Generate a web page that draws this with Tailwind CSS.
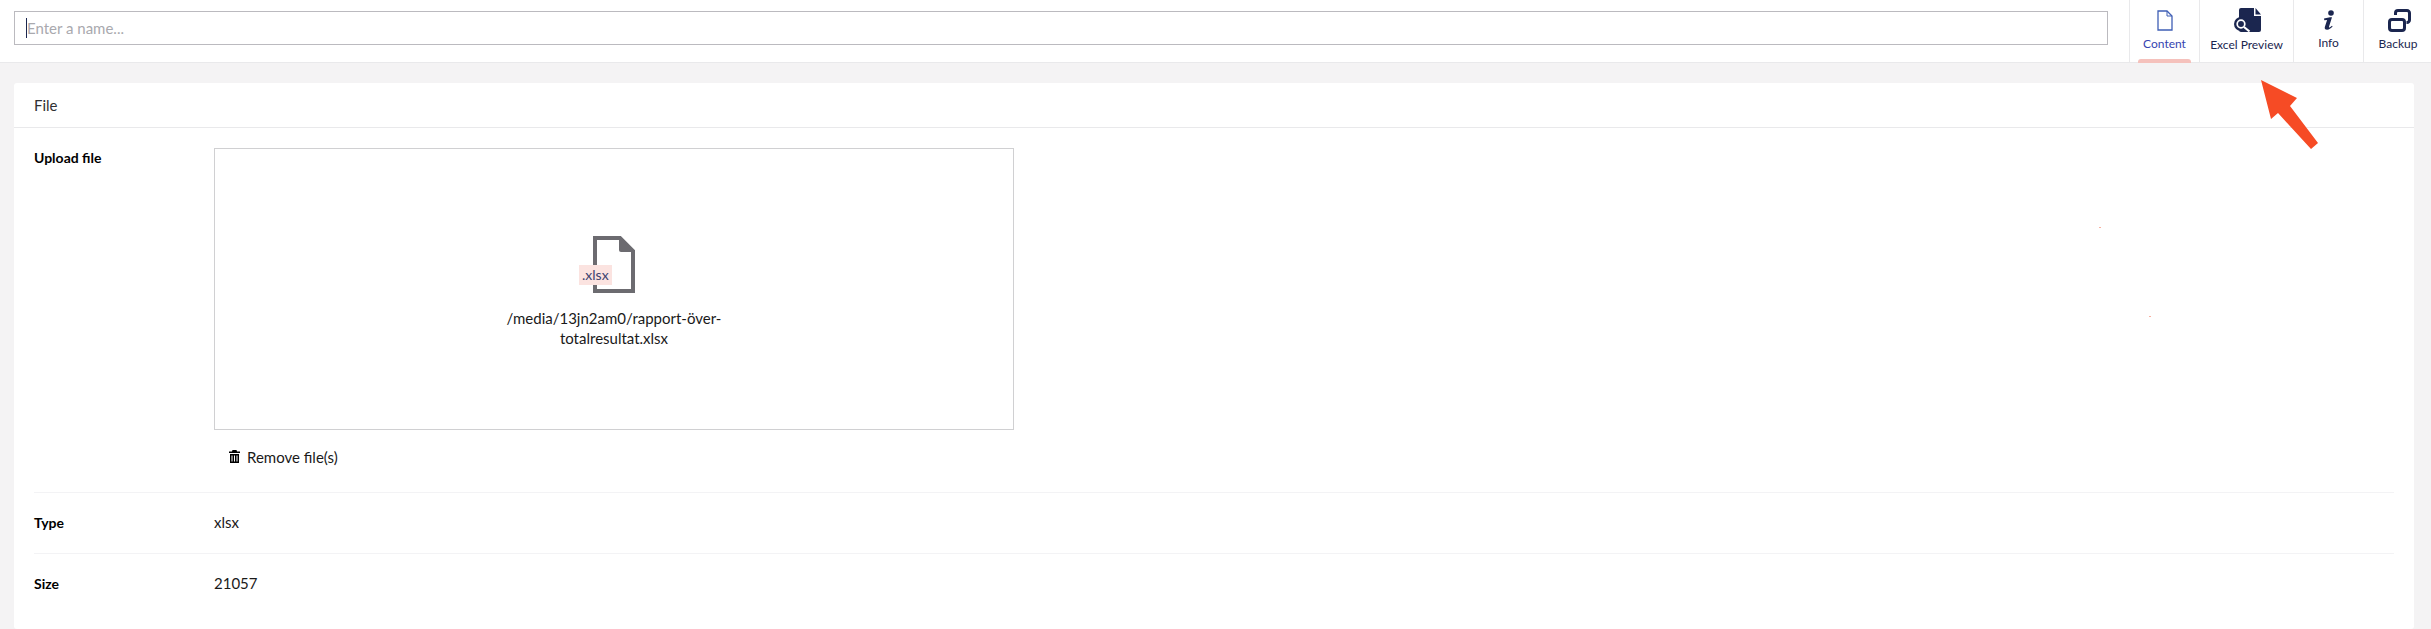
<!DOCTYPE html>
<html lang="en" class="overflow-hidden">
<head>
    <meta charset="UTF-8">
    <title>File</title>
    <script src="https://cdn.jsdelivr.net/npm/@tailwindcss/browser@4"></script>
</head>
<body class="h-[629px] overflow-hidden bg-[#f4f3f4] font-['Lato',sans-serif] text-[14px] text-[#1b264f] relative">
    <!-- Header -->
    <header class="h-[63px] bg-white border-b border-[#e9e9eb] flex">
        <div class="flex-1 pl-[14px] pr-[21px] pt-[11px]">
            <div class="h-[34px] border border-[#bbbabf] flex items-center pl-[11px] text-[15px] text-[#a9a9ae]">
                <span class="w-px h-[20px] bg-[#1b264f]"></span>Enter a name...
            </div>
        </div>
        <nav class="flex w-[302px] shrink-0 text-[12px]">
            <a class="relative w-[70px] border-l border-[#e9e9eb] flex flex-col items-center pt-[10px] text-[#3544b1]">
                <svg width="16" height="21" viewBox="0 0 16 21" fill="none" stroke="#3f5fb5" stroke-width="1.3"><path d="M1 1h9l5 5v14H1z"/><path d="M10 1v5h5" stroke-width="1"/></svg>
                <span class="mt-[5px] leading-[16px]">Content</span>
                <span class="absolute bottom-[-1px] left-[8px] w-[53px] h-[4px] rounded-t-[3px] bg-[#f5c1bc]"></span>
            </a>
            <a class="w-[94px] border-l border-[#e9e9eb] flex flex-col items-center pt-[8px]">
                <svg width="30" height="25" viewBox="0 0 30 25" fill="#1b264f"><path d="M7 2a2 2 0 0 1 2-2h13v8h7v14a2 2 0 0 1-2 2H9a2 2 0 0 1-2-2z"/><path d="M23.500 0L29 6.500h-5.500z"/><circle cx="9" cy="16" r="7"/><circle cx="9" cy="16" r="3.800" fill="none" stroke="#fff" stroke-width="1.700"/><path d="M12 19l5.500 4.500" stroke="#fff" stroke-width="2.200"/></svg>
                <span class="mt-[4px] leading-[16px]">Excel Preview</span>
            </a>
            <a class="w-[70px] border-l border-[#e9e9eb] flex flex-col items-center pt-[10px]">
                <svg width="14" height="21" viewBox="0 0 14 21" fill="#1b264f"><circle cx="9" cy="3" r="2.800"/><path d="M2 8.500l6-1.200h2l-3 9.500c-.2.800.4 1 1 .5l2-1.500.6.800c-1.800 2-3.500 3.200-5.500 3.200-2 0-2.800-1.200-2.200-3l2.200-6.800-2.800.2z"/></svg>
                <span class="mt-[4px] leading-[16px]">Info</span>
            </a>
            <a class="w-[68px] border-l border-[#e9e9eb] flex flex-col items-center pt-[9px] pl-[1px]">
                <svg width="25" height="24" viewBox="0 0 25 24" fill="none" stroke="#1b264f" stroke-width="3"><rect x="3.500" y="10.500" width="15" height="11" rx="2.500"/><path d="M9.500 6V4A2.500 2.500 0 0 1 12 1.500h9A2.500 2.500 0 0 1 23.500 4v7a2.500 2.500 0 0 1-2.500 2.500h-.5"/></svg>
                <span class="mt-[3px] leading-[16px]">Backup</span>
            </a>
        </nav>
    </header>

    <!-- Card -->
    <main class="ml-[14px] mt-[20px] mr-[17px] bg-white rounded-[3px] h-[546px] text-[#000]">
        <div class="h-[45px] border-b border-[#e9e9eb] pl-[20px] flex items-center text-[15px] text-[#303033]">File</div>
        <div class="px-[20px]">
            <div class="flex pt-[20px] pb-[24px] border-b border-[#f3f3f5]">
                <div class="w-[180px] shrink-0 font-bold text-[14px] leading-[20px]">Upload file</div>
                <div>
                    <div class="w-[800px] h-[282px] border border-[#d0d0d2] flex flex-col items-center pt-[87px]">
                        <div class="relative w-[42px] h-[58px]">
                            <svg width="42" height="58" viewBox="0 0 42 58" fill="none"><path d="M2 2h25l13 13v40H2z" stroke="#6c6b70" stroke-width="4"/><path d="M26 2l14 14H28a2 2 0 0 1-2-2z" fill="#6c6b70"/></svg>
                            <span class="absolute left-[-14px] top-[29px] h-[20px] px-[3px] bg-[#fbe3e0] text-[#3c4270] text-[14px] leading-[20px]">.xlsx</span>
                        </div>
                        <p class="mt-[14px] w-[240px] text-center text-[15px] leading-[20px] text-[#1a1a1a]">/media/13jn2am0/rapport-över-totalresultat.xlsx</p>
                    </div>
                    <div class="flex items-center mt-[16px] ml-[15px] text-[15px] leading-[22px] text-[#1a1a1a]">
                        <svg class="mr-[7px] -mt-[2px]" width="11" height="13" viewBox="0 0 11 13" fill="#000"><path d="M3.500 0h4l.5 1.500h3v1.500H0V1.500h3zM1 4h9v9H1zm1.500 1.500v6h1v-6zm2.500 0v6h1v-6zm2.500 0v6h1v-6z" fill-rule="evenodd"/></svg>
                        Remove file(s)
                    </div>
                </div>
            </div>
            <div class="flex h-[61px] items-center border-b border-[#f3f3f5] pb-[2px]">
                <div class="w-[180px] shrink-0 font-bold">Type</div>
                <div class="text-[15px] text-[#1a1a1a]">xlsx</div>
            </div>
            <div class="flex h-[61px] items-center pb-[2px]">
                <div class="w-[180px] shrink-0 font-bold">Size</div>
                <div class="text-[15px] text-[#1a1a1a]">21057</div>
            </div>
        </div>
    </main>

    <!-- Annotation arrow and stray marks -->
    <svg class="absolute left-[2255px] top-[75px]" width="70" height="80" viewBox="2255 75 70 80"><polygon fill="#f64b25" points="2261,80 2297,98 2290,106 2318,143 2311,149 2278,113 2271,119"/></svg>
    <span class="absolute left-[2099px] top-[227px] w-[2px] h-px bg-[#f8b0a0]"></span>
    <span class="absolute left-[2149px] top-[316px] w-[2px] h-px bg-[#f8b0a0]"></span>
</body>
</html>
